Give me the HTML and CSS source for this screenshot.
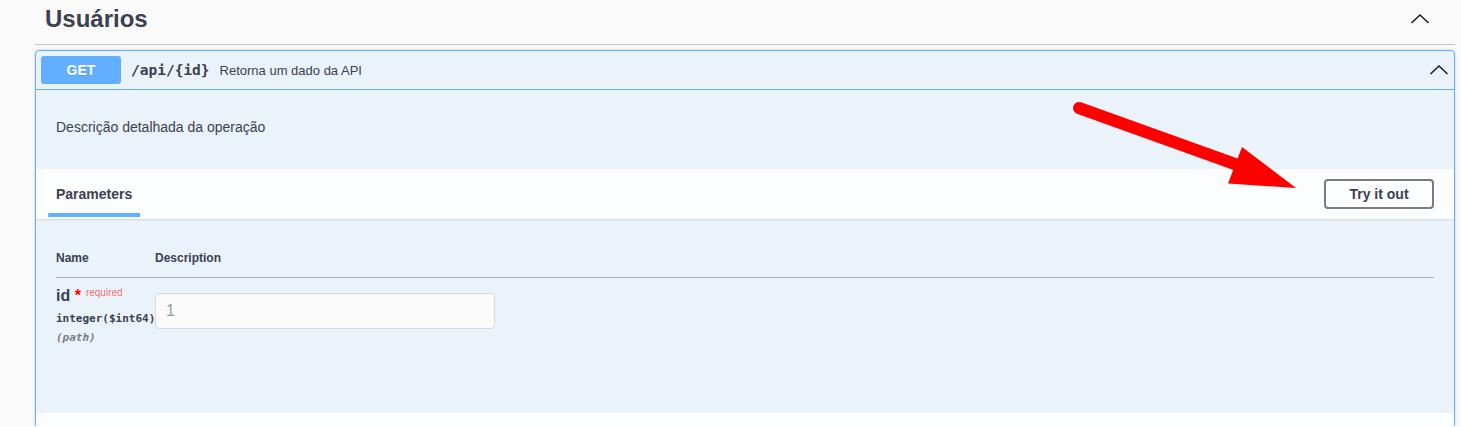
FILE: index.html
```html
<!DOCTYPE html>
<html lang="pt-BR">
<head>
<meta charset="utf-8">
<title>Usuários</title>
<link rel="stylesheet" href="styles.css">
</head>
<body>
<div class="page">
  <section class="tag">
    <h3 class="tag-header">
      <span class="tag-title">Usuários</span>
      <span class="expand">
        <svg width="20" height="20" viewBox="0 0 20 20"><polyline points="1.5,14 10,6 18.5,14" fill="none" stroke="#1b1b1b" stroke-width="1.5"/></svg>
      </span>
    </h3>
    <div class="opblock">
      <div class="summary">
        <span class="method">GET</span>
        <span class="path">/api/{id}</span>
        <span class="summary-desc">Retorna um dado da API</span>
        <svg class="chev" width="20" height="20" viewBox="0 0 20 20"><polyline points="1.5,14 10,6 18.5,14" fill="none" stroke="#1b1b1b" stroke-width="1.5"/></svg>
      </div>
      <div class="description">
        <p>Descrição detalhada da operação</p>
      </div>
      <div class="section-header">
        <div class="tab"><span class="tab-label">Parameters</span></div>
        <button class="try-out">Try it out</button>
      </div>
      <div class="params">
        <div class="ptable">
          <div class="thead">
            <div class="th">Name</div>
            <div class="th">Description</div>
          </div>
          <div class="prow">
            <div class="pname">
              <div class="param-name">id<span class="star">&nbsp;*</span><span class="req">required</span></div>
              <div class="param-type">integer($int64)</div>
              <div class="param-in">(path)</div>
            </div>
            <div class="pdesc">
              <input class="pinput" type="text" placeholder="1">
            </div>
          </div>
        </div>
      </div>
      <div class="responses-header"></div>
    </div>
  </section>
</div>
<svg class="annotation" width="1461" height="427" viewBox="0 0 1461 427">
  <line x1="1079" y1="108" x2="1246" y2="168" stroke="#ff0000" stroke-width="12" stroke-linecap="round"/>
  <polygon points="1242,147 1228,183.5 1296,188" fill="#ff0000"/>
</svg>
</body>
</html>
```

FILE: styles.css
```css
* { box-sizing: border-box; }

html, body {
  margin: 0;
  padding: 0;
  background: #fafafa;
  height: 427px;
  overflow: hidden;
}

body {
  position: relative;
  font-family: "Liberation Sans", Arial, sans-serif;
  color: #3b4151;
}

.page {
  padding: 0 6px 0 35px;
}

.tag-header {
  display: flex;
  align-items: flex-start;
  margin: 0 0 5px;
  padding: 5px 25px 11px 10px;
  border-bottom: 1px solid rgba(59, 65, 81, 0.3);
  font-size: 24px;
  font-weight: 700;
  line-height: 28px;
}

.tag-title { flex: 1; }

.expand {
  display: flex;
  margin-top: 4px;
}

.opblock {
  border: 1px solid #61affe;
  border-radius: 4px;
  background: rgba(97, 175, 254, 0.1);
  box-shadow: 0 0 3px rgba(0, 0, 0, 0.19);
}

.summary {
  display: flex;
  align-items: center;
  padding: 5px;
  border-bottom: 1px solid #61affe;
}

.method {
  width: 80px;
  height: 28px;
  line-height: 28px;
  text-align: center;
  background: #61affe;
  border-radius: 3px;
  color: #fff;
  font-size: 14px;
  font-weight: 700;
  text-shadow: 0 1px 0 rgba(0, 0, 0, 0.1);
}

.path {
  padding: 0 10px;
  font-family: "DejaVu Sans Mono", "Liberation Mono", monospace;
  font-size: 14.5px;
  font-weight: 700;
  color: #3b4151;
}

.summary-desc {
  flex: 1;
  font-size: 13px;
  color: #3b4151;
}

.chev { display: block; }

.description {
  padding: 27px 20px 32px;
}

.description p {
  margin: 0;
  font-size: 14px;
  line-height: 20px;
  color: #3b4151;
}

.section-header {
  display: flex;
  align-items: center;
  justify-content: space-between;
  height: 50px;
  padding: 8px 20px;
  background: rgba(255, 255, 255, 0.8);
  box-shadow: 0 1px 2px rgba(0, 0, 0, 0.1);
}

.tab-label {
  position: relative;
  font-size: 14px;
  font-weight: 700;
  color: #3b4151;
}

.tab-label::after {
  content: "";
  position: absolute;
  left: 50%;
  bottom: -15px;
  width: 120%;
  height: 4px;
  transform: translateX(-50%);
  background: #61affe;
}

.try-out {
  width: 110px;
  height: 30px;
  padding: 0;
  border: 2px solid #7c7c7c;
  border-radius: 4px;
  background: transparent;
  font-family: "Liberation Sans", Arial, sans-serif;
  font-size: 14px;
  font-weight: 700;
  color: #3b4151;
}

.params {
  height: 194px;
  padding: 20px;
}

.thead {
  display: grid;
  grid-template-columns: 99px 1fr;
  border-bottom: 1px solid #a9aeb6;
}

.th {
  padding: 12px 0;
  font-size: 12px;
  line-height: 14px;
  font-weight: 700;
  color: #3b4151;
}

.prow {
  display: grid;
  grid-template-columns: 99px 1fr;
}

.pname {
  padding-top: 10px;
  white-space: nowrap;
}

.param-name {
  font-size: 16px;
  line-height: 16px;
  font-weight: 700;
  color: #3b4151;
}

.star { color: #ff0000; }

.req {
  position: relative;
  top: -5px;
  padding: 5px;
  font-size: 10px;
  font-weight: 400;
  color: rgba(255, 0, 0, 0.6);
}

.param-type {
  padding-top: 3px;
  font-family: "DejaVu Sans Mono", "Liberation Mono", monospace;
  font-size: 11px;
  line-height: 19px;
  font-weight: 700;
  color: #3b4151;
}

.param-in {
  font-family: "DejaVu Sans Mono", "Liberation Mono", monospace;
  font-size: 11px;
  line-height: 19px;
  font-weight: 700;
  font-style: italic;
  color: #7b7f88;
}

.pdesc {
  padding-top: 15px;
}

.pinput {
  display: block;
  width: 340px;
  height: 36px;
  padding: 0 10px;
  border: 1px solid #d9d9d9;
  border-radius: 4px;
  background: #fafafa;
  font-family: "Liberation Sans", Arial, sans-serif;
  font-size: 16px;
  color: #3b4151;
  outline: none;
}

.pinput::placeholder { color: #9a9a9a; }

.responses-header {
  height: 14px;
  background: rgba(255, 255, 255, 0.8);
}

.annotation {
  position: absolute;
  left: 0;
  top: 0;
  pointer-events: none;
}
```
